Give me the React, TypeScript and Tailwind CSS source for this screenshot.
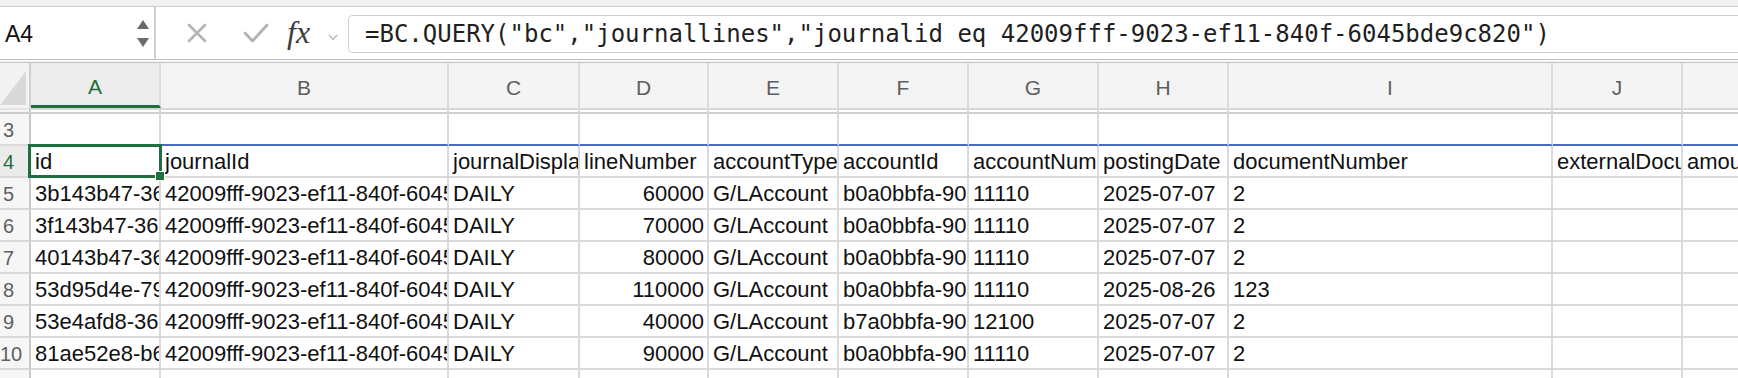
import React from "react";

const letters = ["A", "B", "C", "D", "E", "F", "G", "H", "I", "J", ""];

const header = [
  "id",
  "journalId",
  "journalDisplayName",
  "lineNumber",
  "accountType",
  "accountId",
  "accountNumber",
  "postingDate",
  "documentNumber",
  "externalDocumentNumber",
  "amount",
];

const data: string[][] = [
  ["3b143b47-3660-f011-8d1f-6045bdc8c1a2", "42009fff-9023-ef11-840f-6045bde9c820", "DAILY", "60000", "G/LAccount", "b0a0bbfa-9023-ef11-840f-6045bde9c820", "11110", "2025-07-07", "2", "", ""],
  ["3f143b47-3680-f011-8d1f-6045bdc8c1a2", "42009fff-9023-ef11-840f-6045bde9c820", "DAILY", "70000", "G/LAccount", "b0a0bbfa-9023-ef11-840f-6045bde9c820", "11110", "2025-07-07", "2", "", ""],
  ["40143b47-3660-f011-8d1f-6045bdc8c1a2", "42009fff-9023-ef11-840f-6045bde9c820", "DAILY", "80000", "G/LAccount", "b0a0bbfa-9023-ef11-840f-6045bde9c820", "11110", "2025-07-07", "2", "", ""],
  ["53d95d4e-7982-f011-8d1f-6045bdc8c1a2", "42009fff-9023-ef11-840f-6045bde9c820", "DAILY", "110000", "G/LAccount", "b0a0bbfa-9023-ef11-840f-6045bde9c820", "11110", "2025-08-26", "123", "", ""],
  ["53e4afd8-3680-f011-8d1f-6045bdc8c1a2", "42009fff-9023-ef11-840f-6045bde9c820", "DAILY", "40000", "G/LAccount", "b7a0bbfa-9023-ef11-840f-6045bde9c820", "12100", "2025-07-07", "2", "", ""],
  ["81ae52e8-b660-f011-8d1f-6045bdc8c1a2", "42009fff-9023-ef11-840f-6045bde9c820", "DAILY", "90000", "G/LAccount", "b0a0bbfa-9023-ef11-840f-6045bde9c820", "11110", "2025-07-07", "2", "", ""],
];

function RowHeader({ n, active }: { n: string; active?: boolean }) {
  return (
    <div
      className={
        "h-[32px] border-r-2 border-b-2 border-r-[#c9c9c9] border-b-[#dadada] flex items-center overflow-hidden " +
        (active ? "bg-[#ebebeb]" : "bg-[#f6f6f6]")
      }
    >
      <span
        className={
          "w-[17px] text-center text-[20px] leading-none whitespace-nowrap pt-[2px] " +
          (active ? "text-[#1e6e3e]" : "text-[#5f5f5f]")
        }
      >
        {n}
      </span>
    </div>
  );
}

function Cell({
  v,
  right,
  blueBottom,
  selected,
}: {
  v: string;
  right?: boolean;
  blueBottom?: boolean;
  selected?: boolean;
}) {
  return (
    <div
      className={
        "relative h-[32px] min-w-0 border-r-2 border-r-[#dadada] border-b-2 " +
        (blueBottom ? "border-b-[#4a6cc0]" : "border-b-[#dadada]")
      }
    >
      <div
        className={
          "h-full w-full overflow-hidden whitespace-nowrap flex items-center text-[22px] leading-none text-[#111111] pt-[2px] " +
          (right ? "justify-end pr-[3px]" : "pl-[4px]")
        }
      >
        {v}
      </div>
      {selected && (
        <div className="absolute left-[-3px] top-[-2px] right-[-3px] bottom-[-2px] border-[3px] border-[#1e6e3e] z-10">
          <div className="absolute right-[-6px] bottom-[-6px] w-[10px] h-[10px] bg-[#1e6e3e] border border-white" />
        </div>
      )}
    </div>
  );
}

export default function App() {
  return (
    <div className="w-[1738px] h-[378px] overflow-hidden bg-white font-['Liberation_Sans',Arial,sans-serif] select-none">
      {/* top band */}
      <div className="h-[7px] bg-[#f1f1f1] border-b border-[#cdcdcd]" />
      {/* formula bar row */}
      <div className="h-[52px] flex bg-white">
        <div className="w-[156px] border-r-2 border-[#d2d2d2] flex items-center justify-between pl-[5px] pr-[5px]">
          <span className="text-[23px] leading-none text-[#111111] pt-[2px]">A4</span>
          <div className="flex flex-col items-center gap-[9px]">
            <svg width="12" height="9" viewBox="0 0 12 9">
              <polygon points="6,0 12,9 0,9" fill="#6b6b6b" />
            </svg>
            <svg width="12" height="9" viewBox="0 0 12 9">
              <polygon points="0,0 12,0 6,9" fill="#6b6b6b" />
            </svg>
          </div>
        </div>
        <div className="w-[192px] flex items-center pl-[31px]">
          <svg width="20" height="20" viewBox="0 0 20 20" className="shrink-0">
            <path d="M2 2 L18 18 M18 2 L2 18" stroke="#b3b3b3" strokeWidth="2.6" strokeLinecap="round" />
          </svg>
          <svg width="26" height="22" viewBox="0 0 26 22" className="ml-[36px] shrink-0">
            <path d="M2 11 L9.5 19 L24 3" stroke="#b3b3b3" strokeWidth="2.8" fill="none" strokeLinecap="round" strokeLinejoin="round" />
          </svg>
          <span className="ml-[18px] font-['Liberation_Serif',serif] italic text-[32px] leading-none text-[#3c3c3c] w-[30px] pb-[2px]">
            fx
          </span>
          <svg width="10" height="7" viewBox="0 0 10 7" className="ml-[11px] mt-[8px] shrink-0">
            <path d="M1 1 L5 5.5 L9 1" stroke="#b8b8b8" strokeWidth="1.4" fill="none" />
          </svg>
        </div>
        <div className="flex-1 mt-[8px] mb-[6px] border border-r-0 border-[#cfcfcf] rounded-l-[5px] bg-white flex items-center pl-[16px] overflow-hidden">
          <span className="font-['DejaVu_Sans_Mono',monospace] text-[24px] leading-none text-[#1f1f1f] whitespace-nowrap">
            =BC.QUERY("bc","journallines","journalid eq 42009fff-9023-ef11-840f-6045bde9c820")
          </span>
        </div>
      </div>
      {/* double line */}
      <div className="h-[4px] border-t border-b border-[#c2c2c2] bg-[#f7f7f7]" />

      {/* sheet grid */}
      <div className="grid grid-cols-[31px_130px_288px_131px_129px_130px_130px_130px_130px_324px_130px_130px] w-[1813px]">
        {/* corner */}
        <div className="h-[45px] bg-[#f3f3f3] border-r-2 border-[#cfcfcf] relative flex items-end justify-end">
          <svg width="26" height="34" viewBox="0 0 26 34" className="mb-[3px] mr-[3px]">
            <polygon points="26,0 26,34 0,34" fill="#d9d9d9" />
          </svg>
        </div>
        {letters.map((l, i) => (
          <div
            key={"h" + i}
            className={
              "h-[45px] border-r-2 border-[#dcdcdc] flex items-center justify-center text-[21px] leading-none " +
              (i === 0
                ? "bg-[#ececec] text-[#1e6e3e] border-b-[3px] border-b-[#1e6e3e] pt-[5px]"
                : "bg-[#f4f4f4] text-[#5e5e5e] pt-[4px]")
            }
          >
            {l}
          </div>
        ))}
        {/* hidden rows double line */}
        <div className="h-[6px] bg-[#f6f6f6] border-t-2 border-b-2 border-t-[#e2e2e2] border-b-[#cdcdcd] border-r-2 border-r-[#cfcfcf]" />
        {letters.map((_, i) => (
          <div
            key={"d" + i}
            className="h-[6px] bg-white border-t-2 border-b-2 border-t-[#d6d6d6] border-b-[#cfcfcf] border-r-2 border-r-[#dadada]"
          />
        ))}
        {/* row 3 */}
        <RowHeader n="3" />
        {letters.map((_, i) => (
          <Cell key={"r3" + i} v="" blueBottom />
        ))}
        {/* row 4 */}
        <RowHeader n="4" active />
        {header.map((v, i) => (
          <Cell key={"r4" + i} v={v} selected={i === 0} />
        ))}
        {/* data rows */}
        {data.map((row, r) => (
          <React.Fragment key={"row" + r}>
            <RowHeader n={String(r + 5)} />
            {row.map((v, i) => (
              <Cell key={"c" + r + "-" + i} v={v} right={i === 3} />
            ))}
          </React.Fragment>
        ))}
        {/* row 11 partial */}
        <RowHeader n="11" />
        {letters.map((_, i) => (
          <Cell key={"r11" + i} v="" />
        ))}
      </div>
    </div>
  );
}
